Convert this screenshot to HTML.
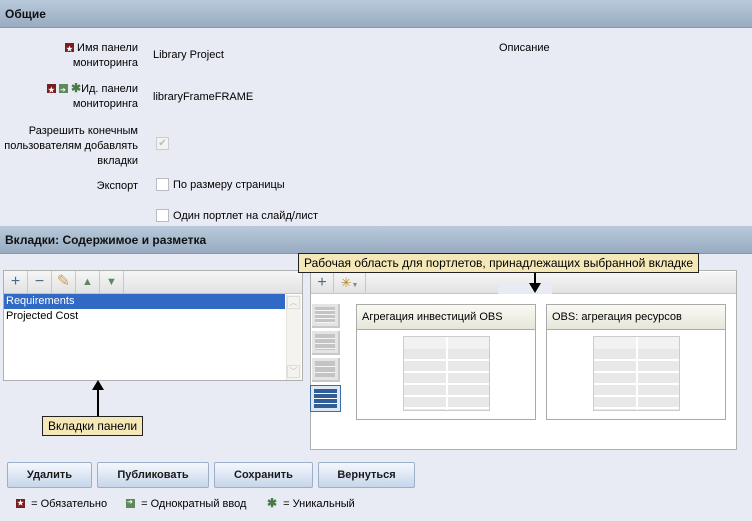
<!DOCTYPE html>
<html><head><meta charset="utf-8"><style>
*{box-sizing:border-box;margin:0;padding:0}
body{width:752px;height:521px;background:#e8ebf3;font-family:"Liberation Sans","Noto Sans CJK SC",sans-serif;font-size:11px;color:#000;position:relative;overflow:hidden}
.a{position:absolute}
.hdr{position:absolute;left:0;width:752px;height:28px;background:linear-gradient(#b9cadc,#98abc0);border-bottom:1px solid #8798ab;font-weight:bold;font-size:12px;padding:7px 5px;color:#111}
.lbl{position:absolute;right:614px;text-align:right;line-height:15px}
.ic{display:inline-block;width:9px;height:9px;vertical-align:-1px;position:relative}
.req{background:#7a1d1d}.req:after{content:"★";color:#fff;font-size:7px;position:absolute;left:1px;top:-1px}
.once{background:#5c8a5c}.once:after{content:"➔";color:#fff;font-size:7px;position:absolute;left:1px;top:-1px}
.uni{color:#4a7a4a;font-weight:bold;font-size:12px;line-height:9px}
.cb{position:absolute;width:13px;height:13px;border:1px solid #b8bcc4;background:#fff}
.tb{position:absolute;background:linear-gradient(#f6f6f6,#e2e2e2);border-bottom:1px solid #c4c4c4}
.tbb{position:absolute;top:0;height:22px;border-right:1px solid #c8c8c8;text-align:center;font-size:16px;line-height:22px;color:#4a6a8a}
.tip{position:absolute;background:#f4e7b8;border:1px solid #222;font-size:12px;padding:2px 5px;white-space:nowrap}
.btn{position:absolute;top:462px;height:26px;background:linear-gradient(#f4f8fd,#c6d6ea);border:1px solid #9bb0c8;border-radius:2px;font-weight:bold;font-size:11px;text-align:center;line-height:24px;color:#1a1a1a}
.lay{position:absolute;left:312px;width:28px;height:24px;background:#e4e4e4;border-right:2px solid #c8c8c8;border-bottom:2px solid #c8c8c8;padding:3px}
.lay div{width:100%;height:100%}
.por{position:absolute;top:304px;width:180px;height:116px;background:#fff;border:1px solid #aaa}
.por .h{height:25px;background:linear-gradient(#fafaf4,#e6e6da);border-bottom:1px solid #aaa;padding:6px 5px;font-size:11px}
.mt{position:absolute;left:46px;top:31px;width:87px;height:75px;border:1px solid #ccc;background:repeating-linear-gradient(#e8e8e8 0 10px,#fff 10px 12px);}
.mt:before{content:"";position:absolute;left:0;top:0;right:0;height:12px;background:#f2f2f2}
.mt:after{content:"";position:absolute;left:42px;top:0;bottom:0;width:2px;background:#fff}
</style></head><body>
<div class="hdr" style="top:0">Общие</div>
<div class="lbl" style="top:41px"><span class="ic req"></span> Имя панели<br>мониторинга</div>
<div class="a" style="left:153px;top:49px">Library Project</div>
<div class="a" style="left:499px;top:42px">Описание</div>
<div class="lbl" style="top:82px"><span class="ic req"></span> <span class="ic once"></span> <span class="uni">✱</span>Ид. панели<br>мониторинга</div>
<div class="a" style="left:153px;top:91px">libraryFrameFRAME</div>
<div class="lbl" style="top:124px">Разрешить конечным<br>пользователям добавлять<br>вкладки</div>
<div class="cb" style="left:156px;top:137px;border-color:#ccc;background:#f3f3f3;color:#bbb;font-size:10px;line-height:11px;text-align:center">✔</div>
<div class="lbl" style="top:179px">Экспорт</div>
<div class="cb" style="left:156px;top:178px"></div>
<div class="a" style="left:173px;top:179px">По размеру страницы</div>
<div class="cb" style="left:156px;top:209px"></div>
<div class="a" style="left:173px;top:210px">Один портлет на слайд/лист</div>
<div class="hdr" style="top:226px">Вкладки: Содержимое и разметка</div>

<div class="a" style="left:3px;top:270px;width:300px;height:111px;background:#fff;border:1px solid #b0b0b0"></div>
<div class="tb" style="left:4px;top:271px;width:298px;height:23px">
<div class="tbb" style="left:0;width:24px">+</div><div class="tbb" style="left:24px;width:24px">−</div><div class="tbb" style="left:48px;width:24px;color:#c9a060">✎</div><div class="tbb" style="left:72px;width:24px;color:#5a8a5a;font-size:11px">▲</div><div class="tbb" style="left:96px;width:24px;color:#5a8a5a;font-size:11px">▼</div></div>
<div class="a" style="left:4px;top:294px;width:281px;height:15px;background:#316ac5;color:#fff;padding:1px 2px;font-size:11px">Requirements</div>
<div class="a" style="left:6px;top:310px">Projected Cost</div>
<div class="a" style="left:286px;top:295px;width:15px;height:85px;background:#f4f3ee;border-left:1px solid #e4e2da"></div>
<div class="a" style="left:287px;top:296px;width:13px;height:13px;border:1px solid #e0ded4;color:#bbb;font-size:8px;text-align:center;line-height:11px">︿</div>
<div class="a" style="left:287px;top:365px;width:13px;height:13px;border:1px solid #e0ded4;color:#bbb;font-size:8px;text-align:center;line-height:11px">﹀</div>
<div class="a" style="left:97px;top:384px;width:2px;height:32px;background:#000"></div>
<div class="a" style="left:92px;top:380px;width:0;height:0;border-left:6px solid transparent;border-right:6px solid transparent;border-bottom:10px solid #000"></div>
<div class="tip" style="left:42px;top:416px">Вкладки панели</div>

<div class="a" style="left:310px;top:270px;width:427px;height:180px;background:#fff;border:1px solid #b0b0b0"></div>
<div class="tb" style="left:311px;top:272px;width:425px;height:22px">
<div class="tbb" style="left:0;width:23px;height:21px">+</div><div class="tbb" style="left:23px;width:32px;height:21px;color:#b08a30;font-size:13px">✳<span style="font-size:7px;color:#888">▼</span></div></div>
<div class="a" style="left:498px;top:284px;width:54px;height:10px;background:#e8ebf3"></div>
<div class="a" style="left:534px;top:266px;width:2px;height:20px;background:#000"></div>
<div class="a" style="left:529px;top:283px;border-left:6px solid transparent;border-right:6px solid transparent;border-top:10px solid #000"></div>
<div class="tip" style="left:298px;top:253px">Рабочая область для портлетов, принадлежащих выбранной вкладке</div>
<div class="lay" style="top:304px"><div style="background:repeating-linear-gradient(#c4c4c4 0 3px,#f4f4f4 3px 4px)"></div></div>
<div class="lay" style="top:331px"><div style="background:repeating-linear-gradient(#c4c4c4 0 4px,#f4f4f4 4px 5px)"></div></div>
<div class="lay" style="top:358px"><div style="background:repeating-linear-gradient(#c4c4c4 0 5px,#f4f4f4 5px 6px)"></div></div>
<div class="a" style="left:310px;top:385px;width:31px;height:27px;border:1px solid #3a6ea5;background:#dfe8f2;padding:3px"><div style="width:100%;height:100%;background:repeating-linear-gradient(#2f5f96 0 4px,#fff 4px 5px)"></div></div>
<div class="por" style="left:356px"><div class="h">Агрегация инвестиций OBS</div><div class="mt"></div></div>
<div class="por" style="left:546px"><div class="h">OBS: агрегация ресурсов</div><div class="mt"></div></div>

<div class="btn" style="left:7px;width:85px">Удалить</div>
<div class="btn" style="left:97px;width:112px">Публиковать</div>
<div class="btn" style="left:214px;width:99px">Сохранить</div>
<div class="btn" style="left:318px;width:97px">Вернуться</div>
<div class="a" style="left:16px;top:498px"><span class="ic req"></span> &nbsp;= Обязательно</div>
<div class="a" style="left:126px;top:498px"><span class="ic once"></span> &nbsp;= Однократный ввод</div>
<div class="a" style="left:267px;top:498px"><span class="uni">✱</span> &nbsp;= Уникальный</div>
</body></html>
